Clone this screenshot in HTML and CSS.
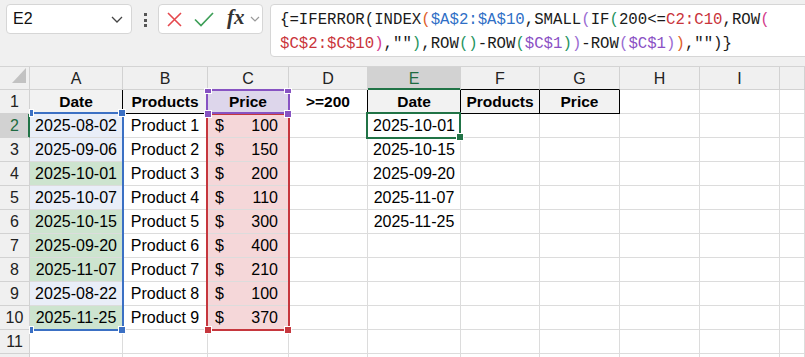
FILE: index.html
```html
<!DOCTYPE html>
<html>
<head>
    <meta charset="utf-8" />
    <title>Sheet</title>
    <link rel="stylesheet" href="styles.css">
</head>
<body>
    <div class="toolbar">
        <div class="namebox">
            <span>E2</span>
            <svg width="12" height="7" viewBox="0 0 12 7"><path d="M1 1 L6 6 L11 1" fill="none" stroke="#444" stroke-width="1.3"/></svg>
        </div>
        <div class="grip"><i></i><i></i><i></i></div>
        <div class="fnbox">
            <svg class="ic-x" width="15" height="15" viewBox="0 0 15 15"><path d="M1 1 L14 14 M14 1 L1 14" stroke="#e5484d" stroke-width="1.6"/></svg>
            <svg class="ic-ok" width="20" height="15" viewBox="0 0 20 15"><path d="M1 7.5 L7 13.5 L19 1" fill="none" stroke="#3e9f58" stroke-width="1.7"/></svg>
            <span class="fx">fx</span>
            <svg class="ic-dd" width="10" height="6" viewBox="0 0 10 6"><path d="M1 1 L5 5 L9 1" fill="none" stroke="#9a9a9a" stroke-width="1.2"/></svg>
        </div>
        <div class="formula">{=IFERROR(INDEX<span class="p2">(</span><span class="rb">$A$2:$A$10</span>,SMALL<span class="p3">(</span>IF<span class="p4">(</span>200&lt;=<span class="rr">C2:C10</span>,ROW<span class="p5">(</span><br><span class="rr">$C$2:$C$10</span><span class="p5">)</span>,""<span class="p4">)</span>,ROW<span class="p4">()</span>-ROW<span class="p4">(</span><span class="rp">$C$1</span><span class="p4">)</span><span class="p3">)</span>-ROW<span class="p3">(</span><span class="rp">$C$1</span><span class="p3">)</span><span class="p2">)</span>,"")}</div>
    </div>

    <div class="sheet">
        <!-- column headers -->
        <div class="c ch corner"><b class="tri"></b></div>
        <div class="c ch">A</div>
        <div class="c ch">B</div>
        <div class="c ch">C</div>
        <div class="c ch">D</div>
        <div class="c ch on">E</div>
        <div class="c ch k">F</div>
        <div class="c ch k">G</div>
        <div class="c ch">H</div>
        <div class="c ch">I</div>
        <div class="c ch"></div>

        <!-- row 1 -->
        <div class="c rh">1</div>
        <div class="c hd gy kr">Date</div>
        <div class="c hd gy kb">Products</div>
        <div class="c hd lv">Price</div>
        <div class="c hd kr">&gt;=200</div>
        <div class="c hd gy kr kb">Date</div>
        <div class="c hd gy kr kb">Products</div>
        <div class="c hd gy kr kb">Price</div>
        <div class="c"></div><div class="c"></div><div class="c"></div>

        <!-- row 2 -->
        <div class="c rh on">2</div>
        <div class="c bl">2025-08-02</div>
        <div class="c">Product 1</div>
        <div class="c px pk"><span>$</span><span>100</span></div>
        <div class="c"></div>
        <div class="c">2025-10-01</div>
        <div class="c"></div><div class="c"></div><div class="c"></div><div class="c"></div><div class="c"></div>

        <!-- row 3 -->
        <div class="c rh">3</div>
        <div class="c bl">2025-09-06</div>
        <div class="c">Product 2</div>
        <div class="c px pk"><span>$</span><span>150</span></div>
        <div class="c"></div>
        <div class="c">2025-10-15</div>
        <div class="c"></div><div class="c"></div><div class="c"></div><div class="c"></div><div class="c"></div>

        <!-- row 4 -->
        <div class="c rh">4</div>
        <div class="c gr">2025-10-01</div>
        <div class="c">Product 3</div>
        <div class="c px pk"><span>$</span><span>200</span></div>
        <div class="c"></div>
        <div class="c">2025-09-20</div>
        <div class="c"></div><div class="c"></div><div class="c"></div><div class="c"></div><div class="c"></div>

        <!-- row 5 -->
        <div class="c rh">5</div>
        <div class="c bl">2025-10-07</div>
        <div class="c">Product 4</div>
        <div class="c px pk"><span>$</span><span>110</span></div>
        <div class="c"></div>
        <div class="c">2025-11-07</div>
        <div class="c"></div><div class="c"></div><div class="c"></div><div class="c"></div><div class="c"></div>

        <!-- row 6 -->
        <div class="c rh">6</div>
        <div class="c gr">2025-10-15</div>
        <div class="c">Product 5</div>
        <div class="c px pk"><span>$</span><span>300</span></div>
        <div class="c"></div>
        <div class="c">2025-11-25</div>
        <div class="c"></div><div class="c"></div><div class="c"></div><div class="c"></div><div class="c"></div>

        <!-- row 7 -->
        <div class="c rh">7</div>
        <div class="c gr">2025-09-20</div>
        <div class="c">Product 6</div>
        <div class="c px pk"><span>$</span><span>400</span></div>
        <div class="c"></div><div class="c"></div>
        <div class="c"></div><div class="c"></div><div class="c"></div><div class="c"></div><div class="c"></div>

        <!-- row 8 -->
        <div class="c rh">8</div>
        <div class="c gr">2025-11-07</div>
        <div class="c">Product 7</div>
        <div class="c px pk"><span>$</span><span>210</span></div>
        <div class="c"></div><div class="c"></div>
        <div class="c"></div><div class="c"></div><div class="c"></div><div class="c"></div><div class="c"></div>

        <!-- row 9 -->
        <div class="c rh">9</div>
        <div class="c bl">2025-08-22</div>
        <div class="c">Product 8</div>
        <div class="c px pk"><span>$</span><span>100</span></div>
        <div class="c"></div><div class="c"></div>
        <div class="c"></div><div class="c"></div><div class="c"></div><div class="c"></div><div class="c"></div>

        <!-- row 10 -->
        <div class="c rh">10</div>
        <div class="c gr">2025-11-25</div>
        <div class="c">Product 9</div>
        <div class="c px pk"><span>$</span><span>370</span></div>
        <div class="c"></div><div class="c"></div>
        <div class="c"></div><div class="c"></div><div class="c"></div><div class="c"></div><div class="c"></div>

        <!-- row 11 -->
        <div class="c rh">11</div>
        <div class="c"></div><div class="c"></div><div class="c"></div><div class="c"></div><div class="c"></div>
        <div class="c"></div><div class="c"></div><div class="c"></div><div class="c"></div><div class="c"></div>

        <!-- row 12, only its top edge shows -->
        <div class="c rh"></div>
        <div class="c"></div><div class="c"></div><div class="c"></div><div class="c"></div><div class="c"></div>
        <div class="c"></div><div class="c"></div><div class="c"></div><div class="c"></div><div class="c"></div>

        <!-- range highlights -->
        <div class="rng rng-blue"></div>
        <div class="rng rng-red"></div>
        <div class="rng rng-purple"></div>
        <div class="rng rng-sel"></div>

        <i class="hdl hb hb-tl"></i>
        <i class="hdl hb hb-tr"></i>
        <i class="hdl hb hb-bl"></i>
        <i class="hdl hb hb-br"></i>
        <i class="hdl hr hr-bl"></i>
        <i class="hdl hr hr-br"></i>
        <i class="hdl hp hp-tl"></i>
        <i class="hdl hp hp-tr"></i>
        <i class="hdl hp hp-bl"></i>
        <i class="hdl hp hp-br"></i>
        <i class="hdl hg"></i>
    </div>
</body>
</html>
```

FILE: styles.css
```css
body {
    margin: 0;
    width: 805px;
    height: 357px;
    overflow: hidden;
    background: #f0f0f0;
    font-family: "Liberation Sans", Arial, sans-serif;
}

/* formula bar */
.toolbar {
    display: flex;
    align-items: flex-start;
    height: 66px;
    padding: 4px 0 0 6px;
    box-sizing: border-box;
}
.namebox {
    width: 126px;
    height: 30px;
    box-sizing: border-box;
    background: #fff;
    border: 1px solid #d6d6d6;
    border-radius: 4px;
    display: flex;
    align-items: center;
    justify-content: space-between;
    padding: 0 8px 0 6px;
    font-size: 16px;
    color: #111;
}
.grip {
    width: 26px;
    display: flex;
    flex-direction: column;
    align-items: center;
    gap: 2.5px;
    padding-top: 9px;
}
.grip i {
    width: 3px;
    height: 3px;
    background: #555;
}
.fnbox {
    width: 105px;
    height: 30px;
    box-sizing: border-box;
    background: #fff;
    border: 1px solid #d6d6d6;
    border-radius: 4px;
    display: flex;
    align-items: center;
    padding-left: 8px;
}
.ic-ok {
    margin-left: 12px;
}
.fx {
    margin-left: 13px;
    font-family: "Liberation Serif", "Times New Roman", serif;
    font-style: italic;
    font-weight: bold;
    font-size: 21px;
    color: #333;
    line-height: 1;
    margin-top: -3px;
}
.ic-dd {
    margin-left: 5px;
}
.formula {
    flex: 1;
    height: 53px;
    box-sizing: border-box;
    margin-left: 7px;
    margin-right: -20px;
    background: #fff;
    border: 1px solid #d6d6d6;
    border-radius: 4px;
    padding: 3px 0 0 9px;
    font-family: "Liberation Mono", "Courier New", monospace;
    font-size: 15.7px;
    line-height: 24px;
    color: #1a1a1a;
    white-space: nowrap;
}
.rb { color: #2f6fc6; }
.rr { color: #c9343b; }
.rp { color: #8a50c4; }
.p2 { color: #e0602a; }
.p3 { color: #9a6bd2; }
.p4 { color: #1f9460; }
.p5 { color: #d33b8c; }

/* grid */
.sheet {
    position: relative;
    display: grid;
    grid-template-columns: 30px 93px 85px 81px 79px 93px 79px 80px 80px 80px 1fr;
    grid-template-rows: 23px repeat(12, 24px);
    border-top: 1px solid #d4d4d4;
    background: #fff;
    height: 290px;
    overflow: hidden;
}
.c {
    box-sizing: border-box;
    border-right: 1px solid #dcdcdc;
    border-bottom: 1px solid #dcdcdc;
    display: flex;
    align-items: center;
    justify-content: center;
    font-size: 16px;
    color: #000;
    white-space: nowrap;
    overflow: hidden;
    min-width: 0;
}
.ch,
.rh {
    background: #f0f0f0;
    border-color: #d2d2d2;
    color: #222;
}
.ch {
    padding-top: 2px;
}
.ch.on {
    background: #d2d2d2;
    color: #1e6b41;
    border-bottom-color: #217346;
    box-shadow: inset 0 -1px #217346;
}
.ch.k {
    border-bottom-color: #000;
}
.rh.on {
    background: #d2d2d2;
    color: #1e6b41;
    border-right-color: #217346;
    box-shadow: inset -1px 0 #217346;
}
.corner {
    justify-content: flex-end;
    align-items: flex-end;
    padding: 0 3px 6px 0;
}
.tri {
    width: 0;
    height: 0;
    border-left: 14px solid transparent;
    border-bottom: 15px solid #c2c2c2;
}
.hd {
    font-weight: bold;
    font-size: 15.5px;
}
.gy { background: #f2f2f2; }
.kr { border-right-color: #000; }
.kb { border-bottom-color: #000; }
.lv { background: #ddd6eb; }
.bl { background: #e9eef8; }
.gr { background: #cde4cf; }
.pk { background: #f5d7d9; }
.px {
    justify-content: space-between;
    padding: 0 10px 0 7px;
}

/* range outlines drawn over the cells */
.rng {
    position: absolute;
    box-sizing: border-box;
    border: 2px solid;
}
.rng-blue {
    left: 30px;
    top: 45px;
    width: 94px;
    height: 219px;
    border-color: #3b70c4;
    border-left: none;
}
.rng-red {
    left: 206px;
    top: 46px;
    width: 84px;
    height: 218px;
    border-color: #c6373e;
}
.rng-purple {
    left: 206px;
    top: 22px;
    width: 84px;
    height: 25px;
    border-color: #8753c2;
}
.rng-sel {
    left: 366px;
    top: 45px;
    width: 95px;
    height: 27px;
    border-color: #217346;
}
.hdl {
    position: absolute;
    width: 6px;
    height: 6px;
    box-shadow: 0 0 0 1px #fff;
}
.hb { background: #3b70c4; }
.hr { background: #c6373e; }
.hp { background: #8753c2; }
.hg { background: #217346; left: 457px; top: 67px; }
.hb-tl { left: 30px; top: 43px; width: 3px; }
.hb-tr { left: 119px; top: 43px; }
.hb-bl { left: 30px; top: 260px; width: 3px; }
.hb-br { left: 119px; top: 260px; }
.hr-bl { left: 205px; top: 260px; }
.hr-br { left: 285px; top: 260px; }
.hp-tl { left: 205px; top: 22px; height: 4px; }
.hp-tr { left: 285px; top: 22px; height: 4px; }
.hp-bl { left: 205px; top: 44px; }
.hp-br { left: 285px; top: 44px; }
```
